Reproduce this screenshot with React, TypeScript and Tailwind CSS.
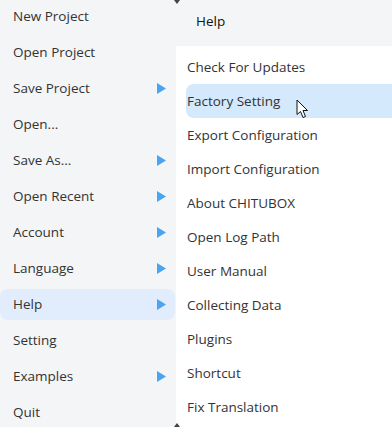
import { ReactNode } from "react";

const mainItems: { label: string; sub?: boolean; active?: boolean }[] = [
  { label: "New Project" },
  { label: "Open Project" },
  { label: "Save Project", sub: true },
  { label: "Open..." },
  { label: "Save As...", sub: true },
  { label: "Open Recent", sub: true },
  { label: "Account", sub: true },
  { label: "Language", sub: true },
  { label: "Help", sub: true, active: true },
  { label: "Setting" },
  { label: "Examples", sub: true },
  { label: "Quit" },
];

const helpItems = [
  "Check For Updates",
  "Factory Setting",
  "Export Configuration",
  "Import Configuration",
  "About CHITUBOX",
  "Open Log Path",
  "User Manual",
  "Collecting Data",
  "Plugins",
  "Shortcut",
  "Fix Translation",
];

function Arrow() {
  return (
    <svg width="9" height="11" viewBox="0 0 9 11" className="shrink-0">
      <path d="M0 0 L9 5.5 L0 11 Z" fill="#4ba4ef" />
    </svg>
  );
}

function Cursor() {
  return (
    <svg width="13" height="20" viewBox="0 0 13 20">
      <path
        d="M1 1 L1 15.5 L4.5 12.5 L7 18.5 L9.5 17.5 L7 11.5 L11.5 11.5 Z"
        fill="#fff"
        stroke="#111"
        strokeWidth="1"
        strokeLinejoin="round"
      />
    </svg>
  );
}

function Row({ children, active }: { children: ReactNode; active?: boolean }) {
  return (
    <div className="h-9 flex items-center">
      <div
        className={
          "w-full h-[31px] flex items-center justify-between pl-[13px] pr-[9px] rounded-lg " +
          (active ? "bg-[#e1edfc]" : "")
        }
      >
        {children}
      </div>
    </div>
  );
}

export default function App() {
  return (
    <div
      className="relative w-[392px] h-[427px] overflow-hidden bg-[#f4f5f7] text-[13.5px] leading-[18px] text-[#333] flex"
      style={{ fontFamily: '"Open Sans", "Noto Sans", sans-serif' }}
    >
      {/* main menu */}
      <div className="w-[176px] shrink-0 -mt-[2px] pr-[1px]">
        {mainItems.map((item) => (
          <Row key={item.label} active={item.active}>
            <span>{item.label}</span>
            {item.sub && <Arrow />}
          </Row>
        ))}
      </div>

      {/* help submenu */}
      <div className="flex-1 flex flex-col">
        <div className="h-[46px] flex items-center pl-5 pb-[4px] text-[#111]">Help</div>
        <div className="flex-1 bg-white pt-1">
          {helpItems.map((label, i) => (
            <div
              key={label}
              className={
                "h-[34px] ml-[10px] pl-[1px] flex items-center rounded-l-lg " +
                (i === 1 ? "bg-[#d4e9fb]" : "")
              }
            >
              {label}
            </div>
          ))}
        </div>
      </div>

      {/* scroll marks */}
      <div className="absolute left-[174px] top-0 w-0 h-0 border-l-[3px] border-r-[3px] border-t-[4px] border-l-transparent border-r-transparent border-t-[#444]" />
      <div className="absolute left-[174px] bottom-0 w-0 h-0 border-l-[3px] border-r-[3px] border-b-[4px] border-l-transparent border-r-transparent border-b-[#444]" />

      <div className="absolute left-[296px] top-[99px]">
        <Cursor />
      </div>
    </div>
  );
}
